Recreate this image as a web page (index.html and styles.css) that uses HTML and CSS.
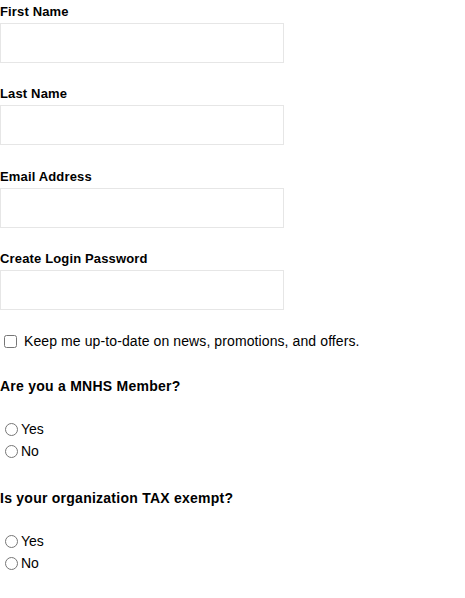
FILE: index.html
```html
<!DOCTYPE html>
<html>
<head>
<meta charset="utf-8">
<link rel="stylesheet" href="styles.css">
</head>
<body>
<form class="form">
  <div class="field">
    <label class="field-label">First Name</label>
    <input class="text-input" type="text">
  </div>
  <div class="field">
    <label class="field-label">Last Name</label>
    <input class="text-input" type="text">
  </div>
  <div class="field">
    <label class="field-label">Email Address</label>
    <input class="text-input" type="email">
  </div>
  <div class="field">
    <label class="field-label">Create Login Password</label>
    <input class="text-input" type="password">
  </div>
  <label class="check-row"><input type="checkbox" class="check"><span class="check-text">Keep me up-to-date on news, promotions, and offers.</span></label>
  <div class="question">Are you a MNHS Member?</div>
  <div class="radios">
    <label class="radio-row"><input type="radio" name="member" class="radio">Yes</label>
    <label class="radio-row"><input type="radio" name="member" class="radio">No</label>
  </div>
  <div class="question question-tight">Is your organization TAX exempt?</div>
  <div class="radios">
    <label class="radio-row"><input type="radio" name="tax" class="radio">Yes</label>
    <label class="radio-row"><input type="radio" name="tax" class="radio">No</label>
  </div>
</form>
</body>
</html>
```
FILE: styles.css
```css
html, body {
  margin: 0;
  padding: 0;
  background: #fff;
}
body {
  font-family: "Liberation Sans", Arial, sans-serif;
  color: #000;
}
.form {
  display: flex;
  flex-direction: column;
  padding-top: 4px;
}
.field {
  display: flex;
  flex-direction: column;
  margin-bottom: 23.33px;
}
.field-label {
  font-size: 13px;
  font-weight: bold;
  line-height: 15px;
  letter-spacing: 0.15px;
  margin-bottom: 4px;
}
.text-input {
  box-sizing: border-box;
  width: 284px;
  height: 40px;
  border: 1px solid #e6e6e6;
  margin: 0;
  padding: 0 8px;
  background: #fff;
}
.check-row {
  display: flex;
  align-items: center;
  font-size: 14px;
  line-height: 16px;
  letter-spacing: 0.1px;
}
.check {
  width: 13px;
  height: 13px;
  margin: 1px 7px 1px 4px;
}
.question {
  font-size: 14px;
  font-weight: bold;
  line-height: 16px;
  letter-spacing: 0.25px;
  margin-top: 29px;
}
.question-tight {
  margin-top: 28px;
}
.radios {
  display: flex;
  flex-direction: column;
  margin-top: 24px;
}
.radio-row {
  display: flex;
  align-items: center;
  font-size: 14px;
  line-height: 16px;
  height: 22px;
}
.radio {
  width: 13px;
  height: 13px;
  margin: 0 3px 0 5px;
}
```
